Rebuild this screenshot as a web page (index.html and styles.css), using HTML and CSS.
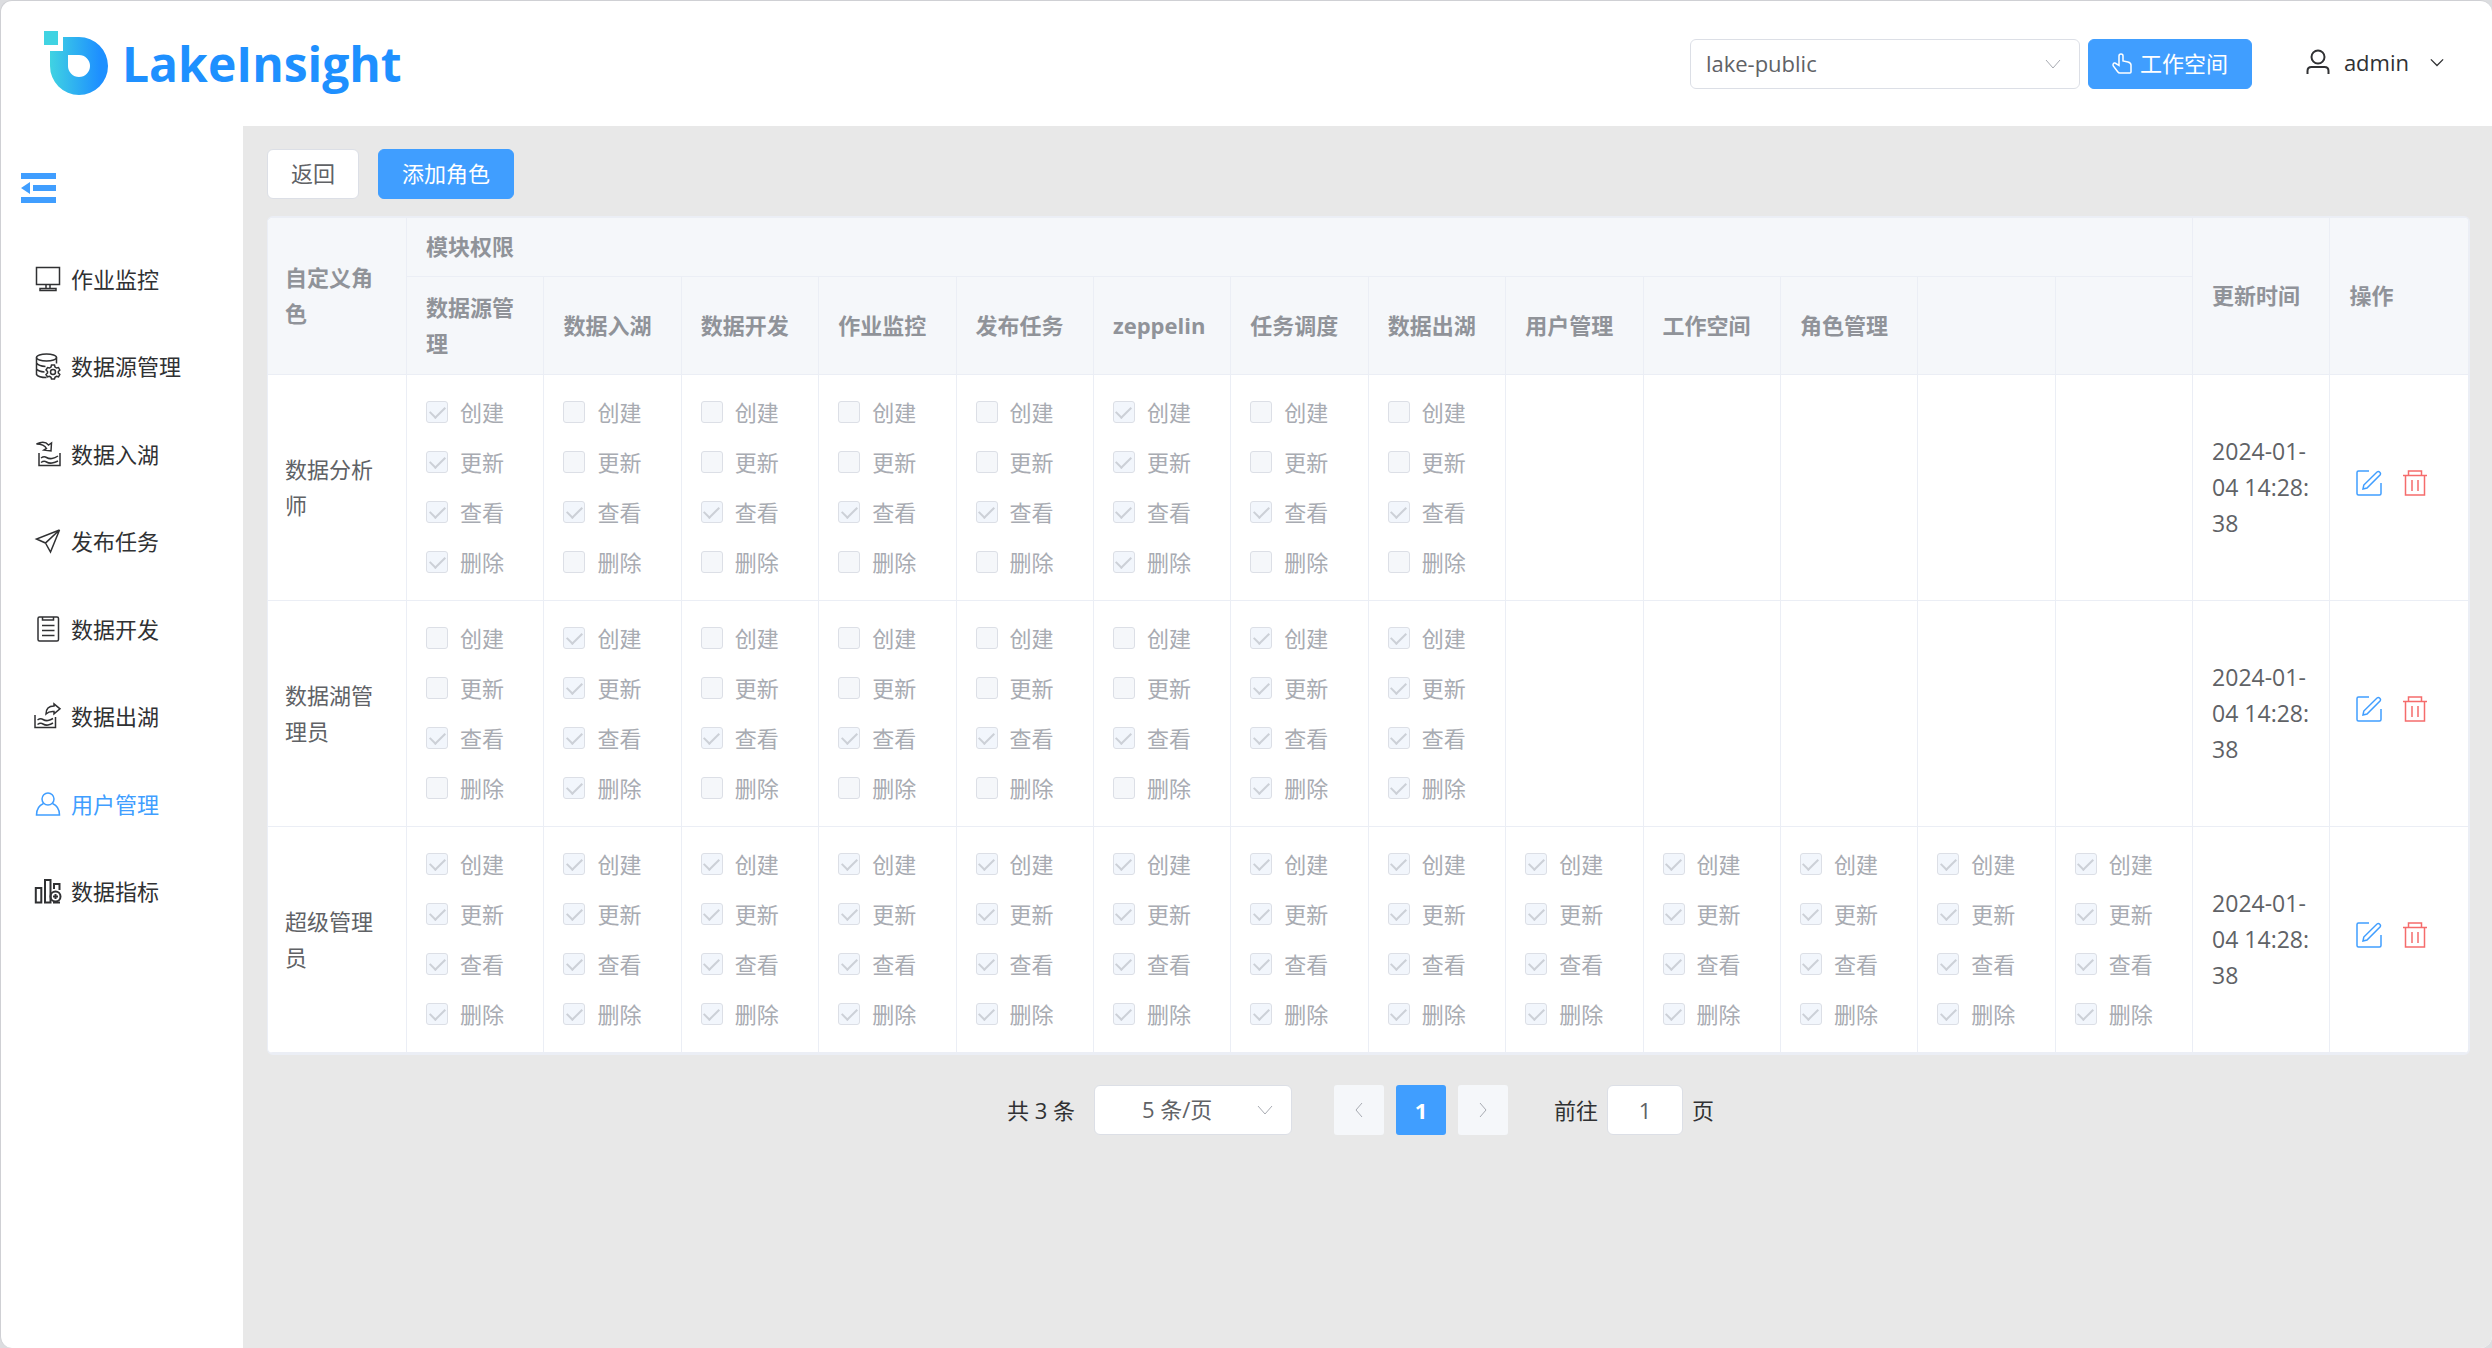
FILE: index.html
```html
<!DOCTYPE html>
<html lang="zh-CN">
<head>
<meta charset="utf-8">
<title>LakeInsight</title>
<link rel="stylesheet" href="styles.css">
</head>
<body>
<div class="app">
  <header class="topbar">
    <a class="brand" href="#">
      <svg class="brand-mark" viewBox="0 0 64 65" aria-hidden="true">
        <defs><linearGradient id="lake" x1="0" x2="1"><stop offset="0" stop-color="#40d3e2"/><stop offset=".85" stop-color="#1e90ff"/></linearGradient></defs>
        <rect width="14" height="14" fill="#40d3e2"/>
        <path fill="url(#lake)" fill-rule="evenodd" d="M19 6h16a29 29 0 1 1-29 29V20h13zM24 24v11a11 11 0 1 0 11-11z"/>
      </svg>
      <span class="brand-name">LakeInsight</span>
    </a>
    <div class="topbar-tools">
      <div class="select-wrap">
        <select class="select space-select" aria-label="空间"><option>lake-public</option></select>
        <svg class="chevron" viewBox="0 0 16 16"><path d="M1 4l7 8 7-8"/></svg>
      </div>
      <button class="btn btn-primary space-btn" type="button">
        <svg class="hand" viewBox="0 0 20 22"><path d="M7 13.500V4a2 2 0 0 1 4 0v5l5 1q3 .8 3 3v7q0 1-1 1H8q-1.500 0-2.500-1.500L1.300 14q-.8-2 .7-3 1.500-.3 2.500 1z"/></svg>
        工作空间
      </button>
      <button class="user" type="button">
        <svg class="user-icon" viewBox="0 0 24 26"><circle cx="12" cy="8" r="6.5"/><path d="M1.500 25v-3q0-4 4-4h13q4 0 4 4v3"/></svg>
        admin
        <svg class="chevron-dark" viewBox="0 0 16 16"><path d="M1 5l7 7 7-7"/></svg>
      </button>
    </div>
  </header>
  <div class="body">
    <nav class="sidebar">
      <button class="toggle" type="button" aria-label="收起菜单">
        <svg viewBox="0 0 35 30"><path d="M0 0h35v6H0zM12 12h23v6H12zM0 24h35v6H0zM0 15l9-6v12z"/></svg>
      </button>
      <ul class="menu">
        <li><a href="#"><svg viewBox="0 0 26 26"><path d="M1.500 1.500h23v17h-23zM11 19v3M15 19v3M5 22.500h16v2H5z"/></svg>作业监控</a></li>
        <li><a href="#"><svg viewBox="0 0 26 26"><ellipse cx="11.500" cy="4.500" rx="10" ry="3.500"/><path d="M1.500 4.500v17q2 3 10 3M21.500 4.500v6M1.500 10q2 3 9 3.500M1.500 16q2 2.500 8 3"/><path d="M16.500 12h3l.5 2 1.500 1 2-.5 1.300 2.500-1.500 1.500v1.500l1.500 1.500-1.300 2.300-2-.5-1.500 1-.5 1.700h-3l-.5-1.700-1.500-1-2 .5L11 21.500l1.500-1.500v-1.500L11 17l1.500-2.500 2 .5 1.500-1z"/><circle cx="18" cy="19" r="2.500"/></svg>数据源管理</a></li>
        <li><a href="#"><svg viewBox="0 0 26 26"><path d="M1.500 3q8-4 12 1l3-2-.5 8-7-1 2.500-1.500Q9 3 1.500 3zM4 12v12.500h21V12M6 17q3-2 5.500-.5t5.500 1T23 15M6 21.500q3-2 5.500-.5t5.500 1 6-2"/></svg>数据入湖</a></li>
        <li><a href="#"><svg viewBox="0 0 26 26"><path d="M24.500 2L1.500 11l9 4zM24.500 2L15.500 24l-5-9z"/></svg>发布任务</a></li>
        <li><a href="#"><svg viewBox="0 0 26 26"><rect x="3" y="1" width="20.500" height="24" rx="1.500"/><path d="M7.500 1v3h11V1M7 9.500h12.500M7 14.500h12.500M7 19.500h12.500"/></svg>数据开发</a></li>
        <li><a href="#"><svg viewBox="0 0 26 26"><path d="M0 12v12.500h20.500V14M2.500 17q3-2 5.500-.5t5 1 5-2M2.500 21.500q3-2 5.500-.5t5 1 5-2M11 11q0-8 8-8V.8l6 5-6 5V8.500q-5-.5-8 2.500z"/></svg>数据出湖</a></li>
        <li><a class="active" href="#"><svg viewBox="0 0 26 26"><circle cx="13" cy="8" r="6"/><path d="M8.500 12.500q-7 3-7 11.500h23q0-8.500-7-11.500"/></svg>用户管理</a></li>
        <li><a href="#"><svg class="bold" viewBox="0 0 26 26"><path d="M.8 10h5.500v14.500H.8zM10 2h5.500v22.500H10zM19 11V6h5.500v6"/><circle cx="20.500" cy="18.500" r="5"/><path d="M20.500 16v5M18 18.500h5M18 24.500h7"/></svg>数据指标</a></li>
      </ul>
    </nav>
    <main class="content">
      <div class="actions">
        <button class="btn" type="button">返回</button>
        <button class="btn btn-primary" type="button">添加角色</button>
      </div>
      <table class="roles">
        <thead>
          <tr class="head-group">
            <th class="role-col" rowspan="2">自定义角色</th>
            <th colspan="13">模块权限</th>
            <th rowspan="2">更新时间</th>
            <th rowspan="2">操作</th>
          </tr>
          <tr class="head-modules">
            <th>数据源管理</th><th>数据入湖</th><th>数据开发</th><th>作业监控</th><th>发布任务</th><th>zeppelin</th><th>任务调度</th><th>数据出湖</th><th>用户管理</th><th>工作空间</th><th>角色管理</th><th></th><th></th>
          </tr>
        </thead>
        <tbody id="roles"></tbody>
      </table>
      <div class="pager">
        <span class="total">共 3 条</span>
        <div class="select-wrap">
          <select class="select size-select" aria-label="每页条数"><option>5 条/页</option></select>
          <svg class="chevron" viewBox="0 0 16 16"><path d="M1 4l7 8 7-8"/></svg>
        </div>
        <div class="pages">
          <button class="page" type="button" aria-label="上一页" disabled><svg viewBox="0 0 16 16"><path d="M11 1L5 8l6 7"/></svg></button>
          <button class="page current" type="button">1</button>
          <button class="page" type="button" aria-label="下一页" disabled><svg viewBox="0 0 16 16"><path d="M5 1l6 7-6 7"/></svg></button>
        </div>
        <label class="jump">前往<input type="text" value="1">页</label>
      </div>
    </main>
  </div>
</div>
<script src="app.js"></script>
</body>
</html>
```
FILE: styles.css
```css
* { box-sizing: border-box; }
html { height: 100%; background: #dcdde0; }
body {
  margin: 0;
  height: 100%;
  font: 22px/36px "Open Sans", "Noto Sans CJK SC", sans-serif;
  color: #303133;
}
button, input, select { font: inherit; color: inherit; margin: 0; }
button { cursor: pointer; }
a { color: inherit; text-decoration: none; }
svg { fill: none; stroke: currentColor; flex: none; display: block; }

.app {
  display: flex;
  flex-direction: column;
  min-height: 100%;
  border: 1px solid #cfd0d4;
  border-right: 0;
  border-bottom: 0;
  border-radius: 12px;
  background: #fff;
  overflow: hidden;
}
.topbar {
  display: flex;
  justify-content: space-between;
  align-items: center;
  height: 125px;
  padding: 0 48px 0 43px;
}
.brand { display: flex; align-items: center; gap: 14px; color: #1e90ff; }
.brand-mark { width: 64px; height: 65px; stroke: none; }
.brand-name { font-size: 48px; font-weight: 700; line-height: 68px; }
.topbar-tools { display: flex; align-items: center; gap: 8px; }

.select-wrap { position: relative; }
.select {
  appearance: none;
  height: 50px;
  padding: 0 40px 2px 15px;
  border: 1px solid #dcdfe6;
  border-radius: 6px;
  background: #fff;
  color: #606266;
}
.space-select { width: 390px; }
.size-select { width: 198px; padding-left: 47px; }
.chevron {
  position: absolute;
  top: 17px;
  right: 19px;
  width: 16px;
  height: 16px;
  color: #a8abb2;
  pointer-events: none;
}
.btn {
  display: flex;
  align-items: center;
  justify-content: center;
  height: 50px;
  padding: 0 23px 2px;
  border: 1px solid #dcdfe6;
  border-radius: 6px;
  background: #fff;
  color: #606266;
}
.btn-primary { border-color: #409eff; background: #409eff; color: #fff; }
.space-btn { gap: 8px; }
.hand { width: 20px; height: 22px; stroke-width: 1.5; }
.user {
  display: flex;
  align-items: center;
  gap: 14px;
  margin-left: 46px;
  padding: 0 0 3px;
  border: 0;
  background: none;
}
.user-icon { width: 24px; height: 26px; stroke-width: 2; }
.chevron-dark { width: 14px; height: 14px; margin-left: 7px; stroke-width: 1.5; }

.body { display: flex; flex: 1; }
.sidebar { width: 242px; flex: none; }
.toggle { display: block; margin: 47px 0 0 20px; padding: 0; border: 0; background: none; color: #409eff; }
.toggle svg { width: 35px; height: 30px; fill: currentColor; stroke: none; }
.menu {
  display: grid;
  grid-auto-rows: 1fr;
  height: 700px;
  margin: 32px 0 0;
  padding: 0 0 0 34px;
  list-style: none;
}
.menu a { display: flex; align-items: center; gap: 10px; height: 100%; }
.menu svg { width: 26px; height: 26px; stroke-width: 1.5; overflow: visible; }
.menu .bold { stroke-width: 2; }
.menu .active { color: #409eff; }

.content { flex: 1; min-width: 0; padding: 23px 22px 24px 24px; background: #e8e8e8; }
.actions { display: flex; gap: 19px; margin-bottom: 17px; }

.roles {
  width: 100%;
  table-layout: fixed;
  border-collapse: separate;
  border-spacing: 0;
  border: 2px solid #ebeef5;
  border-left-width: 1px;
  border-radius: 6px;
  background: #fff;
  color: #606266;
  overflow: hidden;
}
.roles th, .roles td {
  padding: 12px 14px 13px 19px;
  border-right: 1px solid #ebeef5;
  border-bottom: 1px solid #ebeef5;
  text-align: left;
  word-break: break-all;
}
.roles .role-col { width: 139px; }
.roles tr > :first-child:not(.head-modules > *) { padding-left: 17px; }
.roles tr > :last-child { border-right: 0; }
.roles .head-modules > :last-child { border-right: 1px solid #ebeef5; }
.roles th { background: #f5f7fa; color: #909399; font-weight: 700; line-height: 36px; }
.roles .head-group th, .roles .head-modules th { padding-top: 10px; padding-bottom: 12px; }
.head-modules { height: 98px; }
.roles .time { font-size: 23px; }
.check { display: flex; align-items: center; gap: 12px; height: 50px; color: #a8abb2; }
.check input {
  appearance: none;
  display: grid;
  place-items: center;
  width: 22px;
  height: 22px;
  margin: 0;
  border: 1px solid #dcdfe6;
  border-radius: 3px;
  background: #f5f7fa;
}
.check input:checked { background: #f2f6fc; }
.check input:checked::after {
  content: "";
  width: 13px;
  height: 7px;
  margin-top: -4px;
  border: solid #ccd0d7;
  border-width: 0 0 2px 2px;
  transform: rotate(-45deg);
}
.row-tools { display: flex; gap: 20px; padding: 0 0 8px 7px; }
.icon-btn { padding: 0; border: 0; background: none; }
.icon-btn svg { width: 26px; height: 26px; stroke-width: 1.5; }
.edit { color: #409eff; }
.remove { color: #f56c6c; }

.pager { display: flex; align-items: center; justify-content: center; margin-top: 30px; padding-right: 16px; }
.total { min-width: 71px; }
.pager .select-wrap { margin-left: 16px; }
.pages { display: flex; gap: 12px; margin: 0 46px 0 42px; }
.page {
  display: grid;
  place-items: center;
  width: 50px;
  height: 50px;
  padding: 0;
  border: 0;
  border-radius: 3px;
  background: #f5f7fa;
  color: #a8abb2;
}
.page svg { width: 16px; height: 20px; }
.page.current { background: #409eff; color: #fff; font-weight: 700; }
.jump { display: flex; align-items: center; gap: 9px; }
.jump input {
  width: 76px;
  height: 50px;
  border: 1px solid #dcdfe6;
  border-radius: 6px;
  background: #fff;
  color: #606266;
  text-align: center;
}
```
FILE: app.js
```js
const ACTIONS = ["创建", "更新", "查看", "删除"];
const ALL = [1, 1, 1, 1];
const VIEW = [0, 0, 1, 0];
const ROLES = [
  { name: "数据分析师", time: "2024-01-04 14:28:38", modules: [ALL, VIEW, VIEW, VIEW, VIEW, ALL, VIEW, VIEW] },
  { name: "数据湖管理员", time: "2024-01-04 14:28:38", modules: [VIEW, ALL, VIEW, VIEW, VIEW, VIEW, ALL, ALL] },
  { name: "超级管理员", time: "2024-01-04 14:28:38", modules: Array(13).fill(ALL) },
];

const permissionCell = (flags) =>
  `<td>${flags
    ? ACTIONS.map((a, i) => `<label class="check"><input type="checkbox" disabled${flags[i] ? " checked" : ""}>${a}</label>`).join("")
    : ""}</td>`;

const tools = `<td><div class="row-tools">
  <button class="icon-btn edit" type="button" aria-label="编辑"><svg viewBox="0 0 26 26"><path d="M13 1H2.500Q1 1 1 2.500v21Q1 25 2.500 25h21q1.500 0 1.500-1.500V13M7 19l.8-4L21 2q1.500-1 2.800.2t.2 2.800L11 18z"/></svg></button>
  <button class="icon-btn remove" type="button" aria-label="删除"><svg viewBox="0 0 26 26"><path d="M1 5.500h24M6.500 5V1h13v4M3.500 6v19h19V6M10 10v11M16 10v11"/></svg></button>
</div></td>`;

document.getElementById("roles").innerHTML = ROLES.map((role) => `<tr>
  <td>${role.name}</td>
  ${Array.from({ length: 13 }, (_, i) => permissionCell(role.modules[i])).join("")}
  <td class="time">${role.time}</td>
  ${tools}
</tr>`).join("");
```
